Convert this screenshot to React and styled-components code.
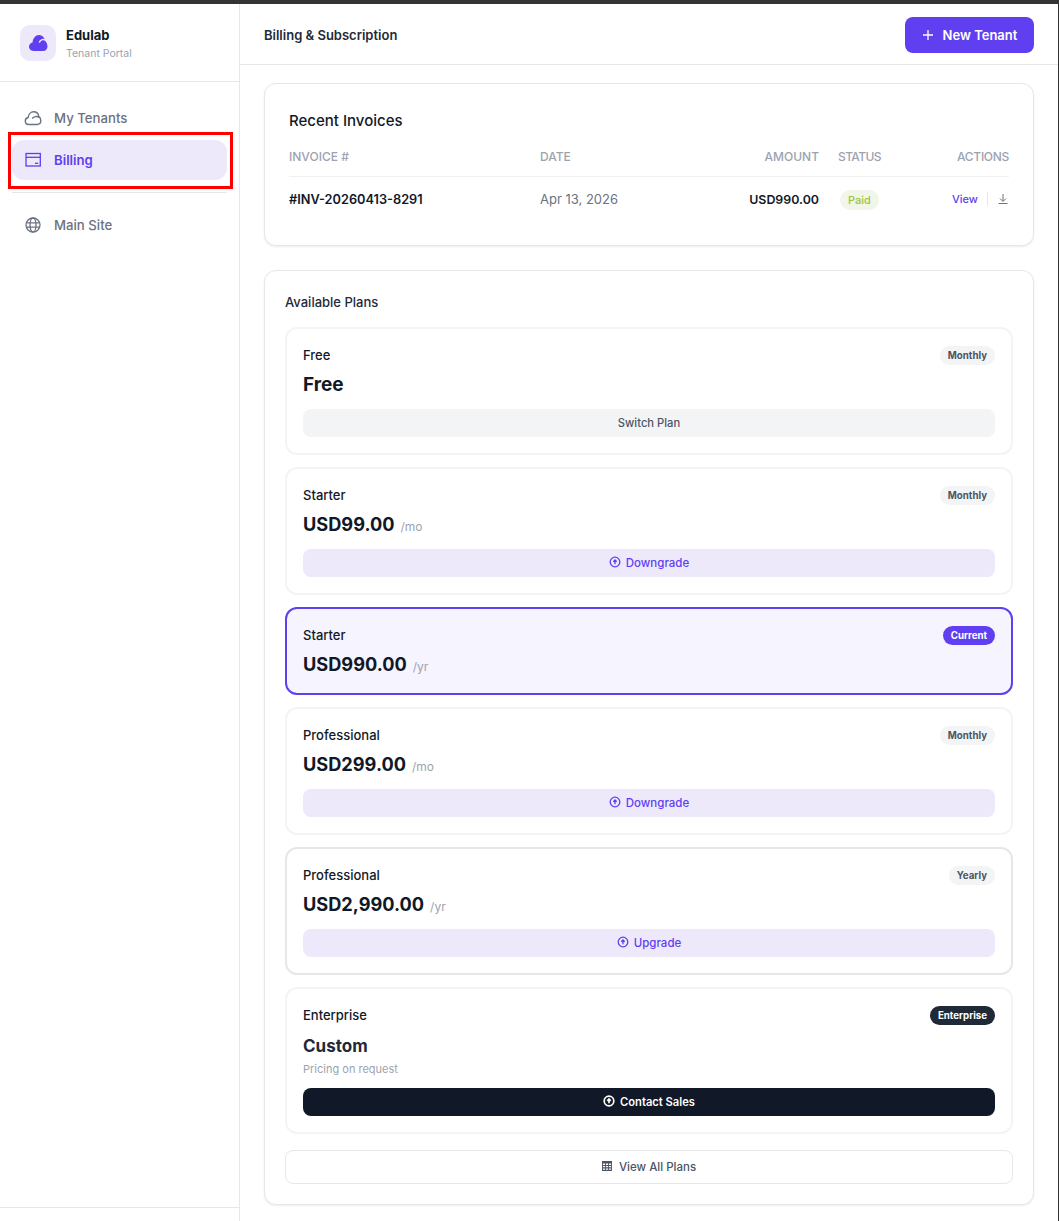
import React from "react";
import styled, { createGlobalStyle } from "styled-components";

const GlobalStyle = createGlobalStyle`
  * { box-sizing: border-box; }
  html, body { margin: 0; padding: 0; background: #fff; }
  body { font-family: Inter, "Noto Sans", sans-serif; color: #111827; }
`;

const Page = styled.div`
  position: relative;
  width: 1059px;
  height: 1221px;
  overflow: hidden;
  border-top: 4px solid #333333;
  border-right: 1px solid #333333;
  display: flex;
`;

const Sidebar = styled.aside`
  width: 240px;
  flex-shrink: 0;
  border-right: 1px solid #e5e7eb;
  display: flex;
  flex-direction: column;
`;

const Brand = styled.div`
  height: 78px;
  flex-shrink: 0;
  border-bottom: 1px solid #e5e7eb;
  padding: 0 20px;
  display: flex;
  align-items: center;
  gap: 10px;
`;

const LogoBox = styled.div`
  width: 36px;
  height: 36px;
  border-radius: 10px;
  background: #ede9fb;
  color: #5f3ff0;
  display: flex;
  align-items: center;
  justify-content: center;
`;

const BrandText = styled.div`
  padding-top: 3px;
  display: flex;
  flex-direction: column;
  gap: 3px;
`;

const BrandName = styled.div`
  font-size: 13px;
  font-weight: 700;
  line-height: 16px;
`;

const BrandSub = styled.div`
  font-size: 10.5px;
  line-height: 16px;
  color: #9ca3af;
`;

const Nav = styled.nav`
  flex: 1;
  padding: 16px 12px 0;
  display: flex;
  flex-direction: column;
`;

const NavItem = styled.div`
  height: 40px;
  flex-shrink: 0;
  border-radius: 12px;
  padding: 0 12px;
  margin-bottom: 2px;
  display: flex;
  align-items: center;
  gap: 12px;
  font-size: 13.2px;
  font-weight: ${(p) => (p.$active ? 600 : 500)};
  color: ${(p) => (p.$active ? "#5f3ff0" : "#6b7280")};
  background: ${(p) => (p.$active ? "#ede9fb" : "transparent")};
`;

const NavDivider = styled.div`
  height: 1px;
  flex-shrink: 0;
  background: #e5e7eb;
  margin: 10px 0 12px;
`;

const SideFoot = styled.div`
  height: 14px;
  flex-shrink: 0;
  border-top: 1px solid #e5e7eb;
`;

const Main = styled.main`
  flex: 1;
  min-width: 0;
  display: flex;
  flex-direction: column;
`;

const Header = styled.header`
  height: 61px;
  flex-shrink: 0;
  border-bottom: 1px solid #e5e7eb;
  padding: 2px 24px 0;
  display: flex;
  align-items: center;
  justify-content: space-between;
`;

const PageTitle = styled.h1`
  margin: 0;
  font-size: 13px;
  font-weight: 600;
  color: #1f2937;
`;

const NewButton = styled.button`
  width: 129px;
  height: 36px;
  border: 0;
  border-radius: 8px;
  background: #5f3ff0;
  color: #fff;
  font: 600 13px Inter, sans-serif;
  display: flex;
  align-items: center;
  justify-content: center;
  gap: 9px;
`;

const Content = styled.div`
  padding: 18px 24px 0;
  display: flex;
  flex-direction: column;
  gap: 24px;
`;

const Card = styled.section`
  background: #fff;
  border: 1px solid #e5e7eb;
  border-radius: 12px;
  box-shadow: 0 1px 2px rgba(0, 0, 0, 0.08);
  padding: ${(p) => p.$pad};
`;

const CardTitle = styled.h2`
  margin: 0;
  font-size: 15px;
  line-height: 20px;
  font-weight: 500;
  color: #111827;
`;

const Row = styled.div`
  display: grid;
  grid-template-columns: 251px 120px 159px 111px 79px;
  align-items: center;
  height: ${(p) => p.$h};
  padding-top: ${(p) => p.$top || 0};
  border-bottom: ${(p) => (p.$line ? "1px solid #f0f1f3" : "0")};
`;

const HeadCell = styled.div`
  font-size: 12px;
  font-weight: 500;
  letter-spacing: ${(p) => p.$track || 0};
  color: #9ca3af;
  text-align: ${(p) => p.$align || "left"};
  padding-left: ${(p) => p.$indent || 0};
`;

const InvoiceNo = styled.div`
  font-size: 12.75px;
  font-weight: 600;
  color: #111827;
`;

const DateCell = styled.div`
  font-size: 13px;
  color: #6b7280;
`;

const AmountCell = styled.div`
  font-size: 12.4px;
  font-weight: 600;
  color: #111827;
  text-align: right;
`;

const StatusCell = styled.div`
  padding-left: 21px;
`;

const PaidBadge = styled.span`
  display: inline-flex;
  align-items: center;
  height: 20px;
  padding: 0 8px;
  border-radius: 10px;
  background: #f1f6e8;
  color: #9bc53d;
  font-size: 11px;
  font-weight: 500;
`;

const Actions = styled.div`
  display: flex;
  align-items: center;
  justify-content: flex-end;
  color: #6b7280;
`;

const ViewLink = styled.a`
  font-size: 11px;
  font-weight: 500;
  color: #5f3ff0;
  padding-right: 9px;
  border-right: 1px solid #e5e7eb;
  margin-right: 9px;
  line-height: 14px;
`;

const PlansTitle = styled.h3`
  margin: 0 0 15px;
  font-size: 13px;
  line-height: 20px;
  font-weight: 500;
  color: #1f2937;
`;

const PlanList = styled.div`
  display: flex;
  flex-direction: column;
  gap: 12px;
`;

const Plan = styled.article`
  border-radius: 12px;
  padding: 17px 16px 16px;
  border: 2px solid ${(p) => (p.$current ? "#5f3ff0" : p.$strong ? "#e5e7eb" : "#f3f4f6")};
  background: ${(p) => (p.$current ? "#f6f4fe" : "#fff")};
`;

const PlanTop = styled.div`
  display: flex;
  align-items: center;
  justify-content: space-between;
  height: 18px;
`;

const PlanName = styled.div`
  font-size: 13px;
  font-weight: 500;
  color: #111827;
`;

const Tag = styled.span`
  height: 19px;
  padding: 0 8px;
  border-radius: 10px;
  display: inline-flex;
  align-items: center;
  font-size: 9.7px;
  font-weight: 700;
  background: ${(p) => p.$bg};
  color: ${(p) => p.$fg};
`;

const PriceRow = styled.div`
  display: flex;
  align-items: baseline;
  gap: 6px;
  margin-top: ${(p) => 7 + (p.$drop || 0)}px;
  height: ${(p) => 26 - (p.$drop || 0)}px;
  line-height: 26px;
`;

const Price = styled.span`
  font-size: ${(p) => p.$size || "18.2px"};
  font-weight: 700;
  color: ${(p) => p.$color || "#111827"};
`;

const Period = styled.span`
  font-size: 12px;
  color: #9ca3af;
`;

const PriceNote = styled.div`
  margin-top: 4px;
  font-size: 11px;
  line-height: 16px;
  color: #9ca3af;
`;

const PlanButton = styled.button`
  width: 100%;
  height: 28px;
  margin-top: ${(p) => p.$gap || "12px"};
  border: 0;
  border-radius: 8px;
  display: flex;
  align-items: center;
  justify-content: center;
  gap: 5px;
  font: ${(p) => p.$weight || 500} ${(p) => p.$size || "11.5px"} Inter, sans-serif;
  background: ${(p) => p.$bg};
  color: ${(p) => p.$fg};

  svg {
    margin-bottom: 2px;
  }
`;

const ViewAll = styled.button`
  width: 100%;
  height: 34px;
  margin-top: 16px;
  border: 1px solid #e5e7eb;
  border-radius: 8px;
  background: #fff;
  color: #4b5563;
  font: 500 11.5px Inter, sans-serif;
  display: flex;
  align-items: center;
  justify-content: center;
  gap: 7px;

  svg {
    margin-bottom: 2px;
  }
`;

const Highlight = styled.div`
  position: absolute;
  left: 8px;
  top: 128px;
  width: 225px;
  height: 57px;
  border: 3px solid #ff0000;
  pointer-events: none;
`;

const CloudFill = () => (
  <svg width="20" height="20" viewBox="0 0 20 20">
    <path fill="currentColor" d="M5.5 18C2.900 18 1 16 1 13.800c0-2.200 1.500-4 3.500-4.400C5 5.300 7.500 2 11 2c2 0 3.800 1 4.800 2.800C17.500 8 19.500 10.500 19.500 13.500 19.500 16 17.500 18 15 18H5.500z" />
    <path fill="none" stroke="#ede9fb" strokeWidth="1.500" strokeLinecap="round" d="M11.500 9C12.500 6.500 15.500 5.500 18.500 8" />
  </svg>
);

const CloudLine = () => (
  <svg width="18" height="18" viewBox="0 0 18 18" fill="none" stroke="currentColor" strokeWidth="1.400" strokeLinejoin="round" strokeLinecap="round">
    <path d="M4.800 15.500C2.800 15.500 1.300 14 1.300 12 1.300 10.200 2.500 8.800 4.200 8.500 4.500 5.200 6.800 2.800 9.600 2.800 12.400 2.800 14.400 4.800 14.800 7.600 16 8.300 16.800 9.800 16.800 11.600 16.800 13.800 15.200 15.500 13 15.500H4.800z" />
    <path d="M8.600 9.200C9.600 7.600 12.600 6.800 14.800 8.200" />
  </svg>
);

const BillingIcon = () => (
  <svg width="18" height="18" viewBox="0 0 18 18" fill="none" stroke="currentColor" strokeWidth="1.300">
    <rect x="2" y="2.500" width="14.300" height="12.500" />
    <path d="M2 6.300h14.300" />
    <path d="M11 12.300h3.300" />
  </svg>
);

const GlobeIcon = () => (
  <svg width="18" height="18" viewBox="0 0 18 18" fill="none" stroke="currentColor" strokeWidth="1.300">
    <circle cx="9" cy="9" r="7" />
    <ellipse cx="9" cy="9" rx="3" ry="7" />
    <path d="M2.300 6.800h13.400M2.300 11.200h13.400" />
  </svg>
);

const PlusIcon = () => (
  <svg width="12" height="12" viewBox="0 0 12 12" fill="none" stroke="currentColor" strokeWidth="1.300">
    <path d="M6 1v10M1 6h10" />
  </svg>
);

const DownloadIcon = () => (
  <svg width="12" height="12" viewBox="0 0 12 12" fill="none" stroke="currentColor" strokeWidth="1">
    <path d="M6 1v7M3 5.500L6 8.500l3-3M1.500 10.500h9" />
  </svg>
);

const ArrowCircle = ({ weight = 1.3 }) => (
  <svg width="12" height="12" viewBox="0 0 12 12" fill="none" stroke="currentColor" strokeWidth={weight}>
    <circle cx="6" cy="6" r="4.800" />
    <path d="M6 8.200V4.200M4.300 5.800L6 4l1.700 1.800" />
  </svg>
);

const GridIcon = () => (
  <svg width="10" height="10" viewBox="0 0 10 10" fill="currentColor">
    <path fillRule="evenodd" d="M0 0h10v10H0zM.9 2.600v1.300h2.100V2.600zm3 0v1.300h2.100V2.600zm3 0v1.300h2.200V2.600zM.9 5v1.300h2.100V5zm3 0v1.300h2.100V5zm3 0v1.300h2.200V5zM.9 7.500v1.300h2.100V7.500zm3 0v1.300h2.100V7.500zm3 0v1.300h2.200V7.500z" />
  </svg>
);

const monthly = { label: "Monthly", bg: "#f3f4f6", fg: "#4b5563" };
const yearly = { label: "Yearly", bg: "#f3f4f6", fg: "#4b5563" };
const violetBtn = { bg: "#ede9fb", fg: "#5f3ff0" };

const plans = [
  { name: "Free", price: "Free", priceSize: "19px", drop: 1, tag: monthly, action: "Switch Plan", bg: "#f3f4f6", fg: "#4b5563", noIcon: true, btnSize: "11.2px" },
  { name: "Starter", price: "USD99.00", period: "/mo", tag: monthly, action: "Downgrade", ...violetBtn },
  { name: "Starter", price: "USD990.00", period: "/yr", current: true, tag: { label: "Current", bg: "#5f3ff0", fg: "#fff" } },
  { name: "Professional", price: "USD299.00", period: "/mo", tag: monthly, action: "Downgrade", ...violetBtn },
  { name: "Professional", price: "USD2,990.00", period: "/yr", strong: true, tag: yearly, action: "Upgrade", ...violetBtn },
  {
    name: "Enterprise",
    price: "Custom",
    priceSize: "17px",
    drop: 2,
    priceColor: "#1f2937",
    note: "Pricing on request",
    tag: { label: "Enterprise", bg: "#1f2937", fg: "#fff" },
    action: "Contact Sales",
    bg: "#111827",
    fg: "#fff",
    weight: 600,
    btnSize: "11.2px",
    iconWeight: 1.7,
    gap: "11px",
  },
];

const PlanCard = ({ plan }) => (
  <Plan $current={plan.current} $strong={plan.strong}>
    <PlanTop>
      <PlanName>{plan.name}</PlanName>
      <Tag $bg={plan.tag.bg} $fg={plan.tag.fg}>{plan.tag.label}</Tag>
    </PlanTop>
    <PriceRow $drop={plan.drop}>
      <Price $size={plan.priceSize} $color={plan.priceColor}>{plan.price}</Price>
      {plan.period && <Period>{plan.period}</Period>}
    </PriceRow>
    {plan.note && <PriceNote>{plan.note}</PriceNote>}
    {plan.action && (
      <PlanButton $bg={plan.bg} $fg={plan.fg} $weight={plan.weight} $size={plan.btnSize} $gap={plan.gap}>
        {!plan.noIcon && <ArrowCircle weight={plan.iconWeight} />}
        {plan.action}
      </PlanButton>
    )}
  </Plan>
);

export default function App() {
  return (
    <>
      <GlobalStyle />
      <Page>
        <Sidebar>
          <Brand>
            <LogoBox><CloudFill /></LogoBox>
            <BrandText>
              <BrandName>Edulab</BrandName>
              <BrandSub>Tenant Portal</BrandSub>
            </BrandText>
          </Brand>
          <Nav>
            <NavItem><CloudLine />My Tenants</NavItem>
            <NavItem $active><BillingIcon />Billing</NavItem>
            <NavDivider />
            <NavItem><GlobeIcon />Main Site</NavItem>
          </Nav>
          <SideFoot />
        </Sidebar>
        <Main>
          <Header>
            <PageTitle>Billing &amp; Subscription</PageTitle>
            <NewButton><PlusIcon />New Tenant</NewButton>
          </Header>
          <Content>
            <Card $pad="27px 24px 24px">
              <CardTitle>Recent Invoices</CardTitle>
              <Row $h="46px" $top="6px" $line>
                <HeadCell>INVOICE #</HeadCell>
                <HeadCell>DATE</HeadCell>
                <HeadCell $align="right">AMOUNT</HeadCell>
                <HeadCell $indent="19px" $track="-0.6px">STATUS</HeadCell>
                <HeadCell $align="right" $track="-0.3px">ACTIONS</HeadCell>
              </Row>
              <Row $h="44px">
                <InvoiceNo>#INV-20260413-8291</InvoiceNo>
                <DateCell>Apr 13, 2026</DateCell>
                <AmountCell>USD990.00</AmountCell>
                <StatusCell><PaidBadge>Paid</PaidBadge></StatusCell>
                <Actions>
                  <ViewLink>View</ViewLink>
                  <DownloadIcon />
                </Actions>
              </Row>
            </Card>
            <Card $pad="21px 20px 20px">
              <PlansTitle>Available Plans</PlansTitle>
              <PlanList>
                {plans.map((plan) => (
                  <PlanCard key={plan.price} plan={plan} />
                ))}
              </PlanList>
              <ViewAll><GridIcon />View All Plans</ViewAll>
            </Card>
          </Content>
        </Main>
        <Highlight />
      </Page>
    </>
  );
}
